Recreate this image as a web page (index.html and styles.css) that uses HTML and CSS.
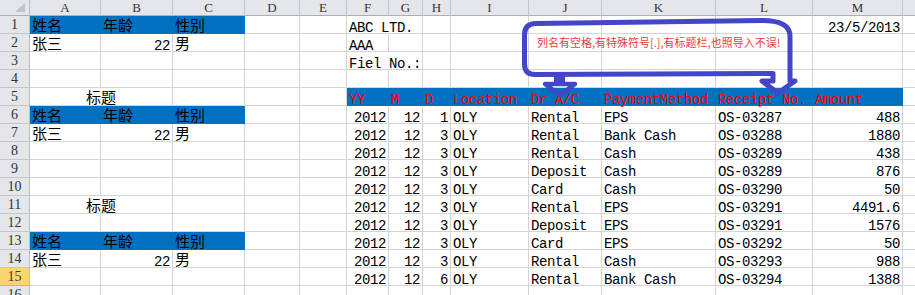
FILE: index.html
```html
<!DOCTYPE html>
<html lang="zh">
<head>
<meta charset="utf-8">
<title>Sheet</title>
<link rel="stylesheet" href="styles.css">
</head>
<body>
<div class="g">
  <!-- header row -->
  <span class="corner"><svg width="29" height="15" viewBox="0 0 29 15"><polygon points="25,3 25,12 15,12" fill="#bfc3c8"/></svg></span>
  <span class="hc">A</span><span class="hc">B</span><span class="hc">C</span><span class="hc">D</span><span class="hc">E</span><span class="hc">F</span><span class="hc">G</span><span class="hc">H</span><span class="hc">I</span><span class="hc">J</span><span class="hc">K</span><span class="hc">L</span><span class="hc">M</span><span class="hc"></span>

  <!-- row 1 -->
  <span class="h">1</span>
  <span class="b z">姓名</span><span class="b z">年龄</span><span class="b z">性别</span><span></span><span></span>
  <span class="s2">ABC LTD.</span><span></span><span></span><span></span><span></span><span></span><span class="n">23/5/2013</span><span></span>

  <!-- row 2 -->
  <span class="h">2</span>
  <span class="z">张三</span><span class="n">22</span><span class="z">男</span><span></span><span></span>
  <span>AAA</span><span></span><span></span><span></span><span></span><span></span><span></span><span></span><span></span>

  <!-- row 3 -->
  <span class="h">3</span>
  <span></span><span></span><span></span><span></span><span></span>
  <span class="s2">Fiel No.:</span><span></span><span></span><span></span><span></span><span></span><span></span><span></span>

  <!-- row 4 -->
  <span class="h">4</span>
  <span></span><span></span><span></span><span></span><span></span><span></span><span></span><span></span><span></span><span></span><span></span><span></span><span></span><span></span>

  <!-- row 5 -->
  <span class="h">5</span>
  <span class="s2 m z">标题</span><span></span><span></span><span></span>
  <span class="b rd">YY</span><span class="b rd">M</span><span class="b rd">D</span><span class="b rd">Location</span><span class="b rd">Dr A/C</span><span class="b rd">PaymentMethod</span><span class="b rd">Receipt No.</span><span class="b rd">Amount</span><span></span>

  <!-- row 6 -->
  <span class="h">6</span>
  <span class="b z">姓名</span><span class="b z">年龄</span><span class="b z">性别</span><span></span><span></span>
  <span class="n">2012</span><span class="n">12</span><span class="n">1</span><span>OLY</span><span>Rental</span><span>EPS</span><span>OS-03287</span><span class="n">488</span><span></span>

  <!-- row 7 -->
  <span class="h">7</span>
  <span class="z">张三</span><span class="n">22</span><span class="z">男</span><span></span><span></span>
  <span class="n">2012</span><span class="n">12</span><span class="n">3</span><span>OLY</span><span>Rental</span><span>Bank Cash</span><span>OS-03288</span><span class="n">1880</span><span></span>

  <!-- row 8 -->
  <span class="h">8</span>
  <span></span><span></span><span></span><span></span><span></span>
  <span class="n">2012</span><span class="n">12</span><span class="n">3</span><span>OLY</span><span>Rental</span><span>Cash</span><span>OS-03289</span><span class="n">438</span><span></span>

  <!-- row 9 -->
  <span class="h">9</span>
  <span></span><span></span><span></span><span></span><span></span>
  <span class="n">2012</span><span class="n">12</span><span class="n">3</span><span>OLY</span><span>Deposit</span><span>Cash</span><span>OS-03289</span><span class="n">876</span><span></span>

  <!-- row 10 -->
  <span class="h">10</span>
  <span></span><span></span><span></span><span></span><span></span>
  <span class="n">2012</span><span class="n">12</span><span class="n">3</span><span>OLY</span><span>Card</span><span>Cash</span><span>OS-03290</span><span class="n">50</span><span></span>

  <!-- row 11 -->
  <span class="h">11</span>
  <span class="s2 m z">标题</span><span></span><span></span><span></span>
  <span class="n">2012</span><span class="n">12</span><span class="n">3</span><span>OLY</span><span>Rental</span><span>EPS</span><span>OS-03291</span><span class="n">4491.6</span><span></span>

  <!-- row 12 -->
  <span class="h">12</span>
  <span></span><span></span><span></span><span></span><span></span>
  <span class="n">2012</span><span class="n">12</span><span class="n">3</span><span>OLY</span><span>Deposit</span><span>EPS</span><span>OS-03291</span><span class="n">1576</span><span></span>

  <!-- row 13 -->
  <span class="h">13</span>
  <span class="b z">姓名</span><span class="b z">年龄</span><span class="b z">性别</span><span></span><span></span>
  <span class="n">2012</span><span class="n">12</span><span class="n">3</span><span>OLY</span><span>Card</span><span>EPS</span><span>OS-03292</span><span class="n">50</span><span></span>

  <!-- row 14 -->
  <span class="h">14</span>
  <span class="z">张三</span><span class="n">22</span><span class="z">男</span><span></span><span></span>
  <span class="n">2012</span><span class="n">12</span><span class="n">3</span><span>OLY</span><span>Rental</span><span>Cash</span><span>OS-03293</span><span class="n">988</span><span></span>

  <!-- row 15 -->
  <span class="h hx">15</span>
  <span></span><span></span><span></span><span></span><span></span>
  <span class="n">2012</span><span class="n">12</span><span class="n">6</span><span>OLY</span><span>Rental</span><span>Bank Cash</span><span>OS-03294</span><span class="n">1388</span><span></span>

  <!-- row 16 -->
  <span class="h">16</span>
  <span></span><span></span><span></span><span></span><span></span><span></span><span></span><span></span><span></span><span></span><span></span><span></span><span></span><span></span>
</div>

<svg class="callout" width="915" height="295" viewBox="0 0 915 295">
  <path d="M536 23.5 L762 20.5 Q790 20.5 790 36 L790 81 L795 81 L778 93 L762 81 L773 81 L773 73.5 L535 74.5 Q524.5 74.5 524.5 64 L524.5 35 Q524.5 23.5 536 23.5 Z" fill="none" stroke="#4545c9" stroke-width="5" stroke-linejoin="round"/>
  <rect x="554" y="75" width="11" height="9" fill="#4545c9"/>
  <path d="M545 84 L575 84 L560 95 Z" fill="none" stroke="#4545c9" stroke-width="4.5" stroke-linejoin="round"/>
</svg>
<div class="note">列名有空格,有特殊符号[.],有标题栏,也照导入不误!</div>
</body>
</html>
```

FILE: styles.css
```css
html, body {
  margin: 0;
  padding: 0;
  background: #ffffff;
}

body {
  width: 915px;
  height: 295px;
  overflow: hidden;
  position: relative;
}

.g {
  display: grid;
  grid-template-columns: 30px 71px 72px 72px 55px 47px 42px 34px 28px 78px 73px 114px 97px 90px 40px;
  grid-template-rows: 16px repeat(16, 18px);
  width: 943px;
}

.g > span {
  box-sizing: border-box;
  border-right: 1px solid #d4d4d4;
  border-bottom: 1px solid #d4d4d4;
  display: flex;
  align-items: flex-end;
  padding: 0 2px;
  white-space: nowrap;
  overflow: visible;
  font-family: "Liberation Mono", monospace;
  font-size: 14px;
  letter-spacing: -0.4px;
  line-height: 10px;
  color: #000000;
}

.g > span.corner {
  background: #e4e6ea;
  border-right: 1px solid #b9bdc3;
  border-bottom: 1px solid #abafb5;
  padding: 0;
  align-items: stretch;
}

.g > span.hc {
  background: #e4e6ea;
  border-right: 1px solid #c3c7cc;
  border-bottom: 1px solid #abafb5;
  justify-content: center;
  align-items: center;
  font-family: "Liberation Serif", serif;
  font-size: 13px;
  letter-spacing: 0;
  line-height: normal;
  padding-top: 1px;
  color: #333333;
}

.g > span.h {
  background: #e4e6ea;
  border-right: 1px solid #b9bdc3;
  border-bottom: 1px solid #c3c7cc;
  justify-content: center;
  align-items: center;
  font-family: "Liberation Serif", serif;
  font-size: 14px;
  letter-spacing: 0;
  line-height: normal;
  color: #333333;
}

.g > span.hx {
  background: #fbd66f;
  border-bottom-color: #e9b445;
  color: #3a3a3a;
}

.g > span.s2 {
  grid-column: span 2;
}

.g > span.n {
  justify-content: flex-end;
}

.g > span.m {
  justify-content: center;
}

.g > span.z {
  font-family: "Noto Sans CJK SC", sans-serif;
  font-size: 15px;
  letter-spacing: 0;
  line-height: 17px;
}

.g > span.b {
  background: #0070c0;
  border-color: #0070c0;
}

.g > span.rd {
  color: #ff0000;
}

.callout {
  position: absolute;
  left: 0;
  top: 0;
  pointer-events: none;
}

.note {
  position: absolute;
  left: 537px;
  top: 35px;
  font-family: "Noto Sans CJK SC", sans-serif;
  font-size: 11px;
  line-height: 14px;
  color: #f23a3a;
  white-space: nowrap;
}
```
